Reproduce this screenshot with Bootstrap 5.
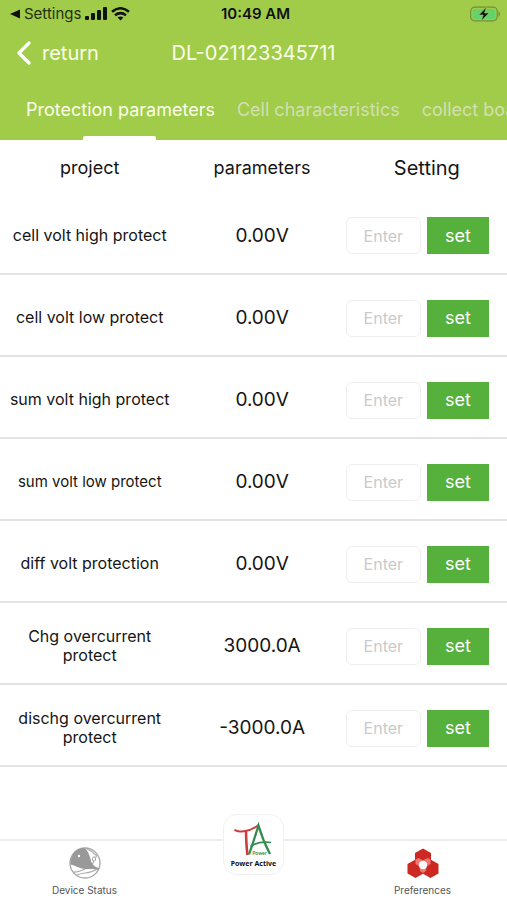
<!DOCTYPE html>
<html lang="en">
<head>
<meta charset="utf-8">
<meta name="viewport" content="width=device-width, initial-scale=1">
<title>Protection parameters</title>
<link href="https://cdn.jsdelivr.net/npm/bootstrap@5.3.0/dist/css/bootstrap.min.css" rel="stylesheet">
<style>
body { font-family: Inter, "Liberation Sans", sans-serif; color: #151515; background: #fff; }
.app-head { background: #a0cc4a; }
.tri-grid { display: grid; grid-template-columns: 1fr auto 1fr; align-items: center; }
.status-line { height: 28px; padding: 0 6px 0 10px; color: #111; font-size: 15px; line-height: 20px; }
.status-line a { color: #26300f; }
.status-time { font-weight: 600; }
.title-line { height: 49px; padding: 0 16px; color: #fbffe9; font-size: 20px; line-height: 28px; }
.title-line h1 { font-size: 20px; font-weight: 400; line-height: 28px; }
.back-btn { color: inherit; font-size: 20px; line-height: 28px; gap: 11px; }
.tab-strip { height: 63px; padding-left: 26px; gap: 22px; font-size: 18px; line-height: 24px; }
.tab-strip .nav-link { padding: 21px 0 18px; color: #d3dfb2; white-space: nowrap; }
.tab-strip .nav-link.active { color: #fbffe9; position: relative; }
.tab-strip .nav-link.active::after { content: ""; position: absolute; left: 50%; bottom: 0; width: 73px; height: 4px; margin-left: -37px; background: #fff; border-radius: 2px 2px 0 0; }
.param-table { table-layout: fixed; text-align: center; }
.param-table th, .param-table td { font-weight: 400; vertical-align: middle; padding: 4px 6px 0 8px; }
.param-table thead th { height: 52px; font-size: 18px; line-height: 24px; }
.param-table thead th:last-child { font-size: 20px; }
.param-table tbody tr { height: 82px; border-bottom: 2px solid #e2e2e2; }
.param-table tbody th { padding-top: 5px; font-size: 16px; line-height: 19px; }
.param-table tbody td { padding-top: 6px; font-size: 19px; line-height: 24px; }
.param-table tbody td:last-child { padding-left: 1px; padding-right: 18px; }
.param-table tbody .name-compact { font-size: 15px; }
.c-name { width: 35%; } .c-value { width: 33%; } .c-set { width: 32%; }
.value-box { height: 37px; padding: 0; text-align: center; font-size: 16px; border-color: #eee; }
.value-box::placeholder { color: #cacaca; }
.set-btn { flex: 0 0 62px; height: 37px; margin-left: 6px; padding: 0; border: 0; border-radius: 0; background: #55b03c; color: #fff; font-size: 18px; line-height: 24px; }
.foot-nav { height: 61px; border-top: 2px solid #ededed; }
.foot-nav a.foot-link { padding-top: 6px; color: #555; font-size: 10px; line-height: 14px; }
.foot-nav .foot-cell { flex: 1 1 0; }
.logo-tile { width: 61px; height: 61px; margin: -27px auto 0; background: #fff; border: 1px solid #f1f1f1; border-radius: 14px; }
</style>
<script src="https://cdn.jsdelivr.net/npm/bootstrap@5.3.0/dist/js/bootstrap.bundle.min.js"></script>
</head>
<body class="d-flex flex-column min-vh-100">
<header class="app-head">
  <div class="status-line tri-grid">
    <div class="d-flex align-items-center">
      <a href="#" class="d-flex align-items-center text-decoration-none">
        <svg width="10" height="10" viewBox="0 0 10 10" class="me-1" aria-hidden="true"><path d="M0 5 10 .5v9z" fill="#111"/></svg>Settings</a>
      <svg width="22" height="14" viewBox="0 0 22 14" class="ms-1" aria-hidden="true" fill="#111"><rect y="9" width="4" height="4" rx="1"/><rect x="6" y="6" width="4" height="7" rx="1"/><rect x="12" y="3" width="4" height="10" rx="1"/><rect x="18" width="4" height="13" rx="1"/></svg>
      <svg width="19" height="14" viewBox="0 0 19 14" class="ms-1" aria-hidden="true" fill="none" stroke="#111" stroke-width="2.5"><path d="M1 4.800Q9.500-2.300 18 4.800M4 8.300q5.500-4.300 11 0"/><path d="m9.500 13.500-2.900-2.900q2.900-2 5.800 0z" fill="#111" stroke="none"/></svg>
    </div>
    <div class="status-time">10:49 AM</div>
    <svg class="ms-auto" width="31" height="16" viewBox="0 0 31 16" role="img" aria-label="Battery charging"><rect x=".7" y="1.200" width="26.500" height="13.600" rx="4" fill="none" stroke="#70903a" stroke-width="1.200"/><rect x="2.500" y="3" width="23" height="10" rx="2.500" fill="#65d36c"/><path d="M28.500 5.500c2 .5 2 4.500 0 5z" fill="#70903a"/><path d="M16.500 1 8.800 9h4.400l-2 6L19 7h-4.500z" fill="#111" stroke="#a0cc4a" stroke-width=".6"/></svg>
  </div>
  <div class="title-line tri-grid">
    <button type="button" class="back-btn btn border-0 p-0 d-flex align-items-center justify-content-start">
      <svg width="15" height="24" viewBox="0 0 15 24" aria-hidden="true"><path d="M13 2 3 12l10 10" fill="none" stroke="#fff" stroke-width="3.200" stroke-linecap="round" stroke-linejoin="round"/></svg>return</button>
    <h1 class="m-0">DL-021123345711</h1>
  </div>
  <nav class="tab-strip nav flex-nowrap overflow-hidden" aria-label="Sections">
    <a class="nav-link active" href="#" aria-current="page">Protection parameters</a>
    <a class="nav-link" href="#">Cell characteristics</a>
    <a class="nav-link" href="#">collect board</a>
  </nav>
</header>
<main>
  <table class="param-table w-100">
    <thead><tr><th class="c-name" scope="col">project</th><th class="c-value" scope="col">parameters</th><th class="c-set" scope="col">Setting</th></tr></thead>
    <tbody>
      <tr><th scope="row"><label for="p1">cell volt high protect</label></th><td>0.00V</td><td><div class="d-flex"><input id="p1" class="value-box form-control" placeholder="Enter"><button type="button" class="set-btn btn">set</button></div></td></tr>
      <tr><th scope="row"><label for="p2">cell volt low protect</label></th><td>0.00V</td><td><div class="d-flex"><input id="p2" class="value-box form-control" placeholder="Enter"><button type="button" class="set-btn btn">set</button></div></td></tr>
      <tr><th scope="row"><label for="p3">sum volt high protect</label></th><td>0.00V</td><td><div class="d-flex"><input id="p3" class="value-box form-control" placeholder="Enter"><button type="button" class="set-btn btn">set</button></div></td></tr>
      <tr><th scope="row" class="name-compact"><label for="p4">sum volt low protect</label></th><td>0.00V</td><td><div class="d-flex"><input id="p4" class="value-box form-control" placeholder="Enter"><button type="button" class="set-btn btn">set</button></div></td></tr>
      <tr><th scope="row"><label for="p5">diff volt protection</label></th><td>0.00V</td><td><div class="d-flex"><input id="p5" class="value-box form-control" placeholder="Enter"><button type="button" class="set-btn btn">set</button></div></td></tr>
      <tr><th scope="row"><label for="p6">Chg overcurrent protect</label></th><td>3000.0A</td><td><div class="d-flex"><input id="p6" class="value-box form-control" placeholder="Enter"><button type="button" class="set-btn btn">set</button></div></td></tr>
      <tr><th scope="row"><label for="p7">dischg overcurrent protect</label></th><td>-3000.0A</td><td><div class="d-flex"><input id="p7" class="value-box form-control" placeholder="Enter"><button type="button" class="set-btn btn">set</button></div></td></tr>
    </tbody>
  </table>
</main>
<nav class="foot-nav d-flex mt-auto" aria-label="Main">
  <a href="#" class="foot-cell foot-link d-flex flex-column align-items-center text-decoration-none">
    <svg width="32" height="32" viewBox="0 0 32 32" class="mb-1" aria-hidden="true"><circle cx="16" cy="16" r="15" fill="#fff" stroke="#a5a5a5" stroke-width="1.300"/><path d="M1.500 17.500C1 8 7 1 16 1c3 3 4.500 7 5.500 11 1 5 4 8 9 9.500l-1 1.500c-5-1.500-9-1-14-1-5-.500-9-3.500-14-4.500z" fill="#999"/><path d="M18 2c5 2 8 5 10 7M28 8l-5 10M4 25c6 1 9-2 12-3M8 28c7-3 13-1 20-6" fill="none" stroke="#aaa" stroke-width="1.100"/><circle cx="10" cy="9" r="1.200" fill="#fff"/><ellipse cx="25" cy="12" rx="1.600" ry="2.200" fill="#fff" stroke="#a5a5a5"/></svg>
    Device Status</a>
  <div class="foot-cell"><a href="#" class="logo-tile d-block" aria-label="Power Active">
    <svg class="d-block" width="59" height="59" viewBox="0 0 59 59" aria-hidden="true"><path d="M10.500 14.500c2 3 15 3 24-4.500" fill="none" stroke="#cc3d3d" stroke-width="2"/><path d="M22 16q.2 14 1.500 24" fill="none" stroke="#cc3d3d" stroke-width="2.600"/><path d="M25 39.500Q31 22 34.500 10.500 39 26 46 39" fill="none" stroke="#348c51" stroke-width="2.300"/><path d="M26.500 31.500Q34 26 47 27.500" fill="none" stroke="#348c51" stroke-width="1.700"/><text x="35.500" y="40" text-anchor="middle" font-family="Lato, sans-serif" font-size="5" font-weight="700" fill="#348c51">Power</text><text x="29.500" y="51" text-anchor="middle" font-family="Noto Sans, sans-serif" font-size="7" font-weight="700" fill="#111">Power Active</text></svg></a></div>
  <a href="#" class="foot-cell foot-link d-flex flex-column align-items-center text-decoration-none">
    <svg width="32" height="32" viewBox="0 0 32 32" class="mb-1" aria-hidden="true"><g fill="#cc2922"><path d="m16 1.500 8 4.500v9.500L16 20l-8-4.500V6z"/><path d="m8.500 12.500 8 4.500v9.500l-8 4.500-8-4.500V17z"/><path d="m23.500 12.500 8 4.500v9.500l-8 4.500-8-4.500V17z"/></g><path d="m8.500 12.500 3-1.500 4.500 2.500 4.500-2.500 3 1.500v4.500l-4 2.500-.500 4.500-3 2-3-2-.500-4.500-4-2.500z" fill="#ef7774"/><circle cx="16" cy="18" r="4.200" fill="#fff"/></svg>
    Preferences</a>
</nav>
</body>
</html>
